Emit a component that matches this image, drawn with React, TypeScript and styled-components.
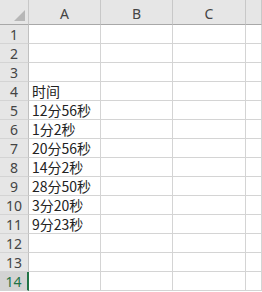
import styled, { createGlobalStyle } from 'styled-components';

const GlobalStyle = createGlobalStyle`
  html, body {
    margin: 0;
    padding: 0;
    background: #ffffff;
  }
  body {
    font-family: "Noto Sans CJK SC", "Noto Sans", sans-serif;
  }
`;

const Sheet = styled.div`
  display: grid;
  grid-template-columns: 29px 72px 72px 73px 1fr;
  grid-template-rows: 25px repeat(14, 19px);
  width: 262px;
  height: 292px;
  overflow: hidden;
  background: #ffffff;
`;

const Corner = styled.div`
  position: relative;
  background: #e6e6e6;
  border-right: 1px solid #c8c8c8;
  border-bottom: 1px solid #a8a8a8;
  box-sizing: border-box;

  &::after {
    content: '';
    position: absolute;
    right: 3px;
    bottom: 3px;
    width: 0;
    height: 0;
    border-left: 11px solid transparent;
    border-bottom: 11px solid #b7b7b7;
  }
`;

const ColHead = styled.div`
  display: flex;
  align-items: center;
  justify-content: center;
  background: #e6e6e6;
  border-right: 1px solid #c8c8c8;
  border-bottom: 1px solid #a8a8a8;
  box-sizing: border-box;
  color: #444444;
  font-family: "Noto Sans", sans-serif;
  font-size: 14px;
  padding-top: 2px;
`;

const RowHead = styled.div<{ $active?: boolean }>`
  display: flex;
  align-items: center;
  justify-content: center;
  background: ${p => (p.$active ? '#d3d3d3' : '#e6e6e6')};
  border-right: ${p => (p.$active ? '2px solid #217346' : '1px solid #c0c0c0')};
  border-bottom: 1px solid #d4d4d4;
  box-sizing: border-box;
  color: ${p => (p.$active ? '#217346' : '#444444')};
  font-family: "Noto Sans", sans-serif;
  font-size: 14px;
`;

const Cell = styled.div`
  display: flex;
  align-items: center;
  padding-left: 3px;
  border-right: 1px solid #d4d4d4;
  border-bottom: 1px solid #d4d4d4;
  box-sizing: border-box;
  color: #222222;
  font-size: 14px;
  white-space: nowrap;
  overflow: visible;
`;

const columns = ['A', 'B', 'C', ''];

const values: Record<number, string> = {
  4: '时间',
  5: '12分56秒',
  6: '1分2秒',
  7: '20分56秒',
  8: '14分2秒',
  9: '28分50秒',
  10: '3分20秒',
  11: '9分23秒',
};

export default function App() {
  const rows = Array.from({ length: 14 }, (_, i) => i + 1);
  return (
    <>
      <GlobalStyle />
      <Sheet>
        <Corner />
        {columns.map((c, i) => (
          <ColHead key={i}>{c}</ColHead>
        ))}
        {rows.map(r => (
          <Row key={r} n={r} />
        ))}
      </Sheet>
    </>
  );
}

function Row({ n }: { n: number }) {
  return (
    <>
      <RowHead $active={n === 14}>{n}</RowHead>
      <Cell>{values[n] ?? ''}</Cell>
      <Cell />
      <Cell />
      <Cell />
    </>
  );
}
